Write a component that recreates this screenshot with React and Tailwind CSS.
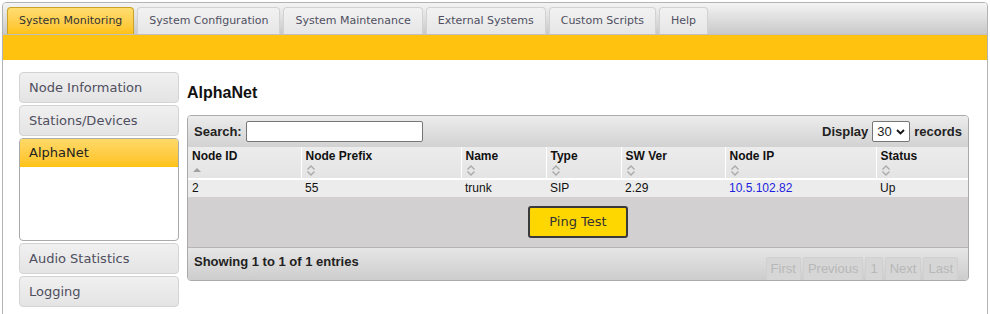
import React from 'react';

const tabs = ['System Monitoring', 'System Configuration', 'System Maintenance', 'External Systems', 'Custom Scripts', 'Help'];

const columns = [
  { label: 'Node ID', w: 'w-[113px]', sorted: true },
  { label: 'Node Prefix', w: 'w-[160px]' },
  { label: 'Name', w: 'w-[85px]' },
  { label: 'Type', w: 'w-[75px]' },
  { label: 'SW Ver', w: 'w-[104px]' },
  { label: 'Node IP', w: 'w-[151px]' },
  { label: 'Status', w: 'w-[94px]' },
];

function SortIcon({ sorted }) {
  if (sorted) {
    return (
      <svg width="10" height="10" viewBox="0 0 10 10" className="block">
        <path d="M1 7 L5 3 L9 7 Z" fill="#a0a0a0" />
      </svg>
    );
  }
  return (
    <svg width="10" height="11" viewBox="0 0 10 11" className="block">
      <path d="M1.5 4.5 L5 1 L8.5 4.5" fill="none" stroke="#aaaaaa" strokeWidth="1.4" />
      <path d="M1.5 6.5 L5 10 L8.5 6.5" fill="none" stroke="#aaaaaa" strokeWidth="1.4" />
    </svg>
  );
}

function SideItem({ label }) {
  return (
    <div className="h-[31px] flex items-center px-[9px] rounded-[4px] border border-[#d3d3d3] bg-gradient-to-b from-[#f0f0f0] to-[#e4e4e4] text-[13px] text-[#4f4f5f]">
      {label}
    </div>
  );
}

export default function App() {
  return (
    <div className="w-[990px] h-[314px] overflow-hidden bg-white pt-[2px] px-[2px] font-['DejaVu_Sans',sans-serif]">
      <div className="h-[320px] border border-[#b3b3b3] rounded-t-[4px]">
        {/* tab bar */}
        <div className="h-[32px] rounded-t-[3px] bg-gradient-to-b from-[#f4f4f4] to-[#c9c9c9] border-b border-[#c0c0c0] flex items-end gap-[3px] pl-[4px]">
          {tabs.map((t, i) => (
            <div
              key={t}
              className={
                'h-[27px] flex items-center px-[11px] rounded-t-[4px] border border-b-0 text-[11px] ' +
                (i === 0
                  ? 'bg-gradient-to-b from-[#ffdd70] to-[#ffc20e] border-[#c9a227] text-[#333]'
                  : 'bg-gradient-to-b from-[#f2f2f2] to-[#e6e6e6] border-[#d2d2d2] text-[#4f4f5f]')
              }
            >
              {t}
            </div>
          ))}
        </div>
        <div className="h-[25px] bg-[#ffc20e]" />

        {/* content */}
        <div className="flex pt-[12px] pl-[16px]">
          {/* sidebar */}
          <div className="w-[160px] flex flex-col gap-[2px]">
            <SideItem label="Node Information" />
            <SideItem label="Stations/Devices" />
            <div className="h-[103px] rounded-[4px] border border-[#aaaaaa] bg-white overflow-hidden">
              <div className="h-[28px] flex items-center px-[9px] bg-gradient-to-b from-[#ffd966] to-[#ffc20e] text-[13px] text-[#222]">
                AlphaNet
              </div>
            </div>
            <SideItem label="Audio Statistics" />
            <SideItem label="Logging" />
          </div>

          {/* main */}
          <div className="ml-[8px] w-[782px] font-['Liberation_Sans',Arial,sans-serif] text-[#111]">
            <div className="h-[43px] flex items-center pb-[2px] text-[16px] font-bold">AlphaNet</div>

            <div className="border border-[#aaaaaa] rounded-[4px] overflow-hidden">
              {/* toolbar */}
              <div className="h-[31px] flex items-center justify-between px-[6px] bg-gradient-to-b from-[#ececec] to-[#d2d2d2] text-[13px] font-bold text-[#222]">
                <div className="flex items-center gap-[4px]">
                  <span>Search:</span>
                  <div className="w-[177px] h-[21px] bg-white border border-[#767676] rounded-[2px]" />
                </div>
                <div className="flex items-center gap-[4px]">
                  <span>Display</span>
                  <div className="w-[38px] h-[21px] bg-white border border-[#767676] rounded-[2px] flex items-center justify-between px-[4px] font-normal text-[13px]">
                    <span>30</span>
                    <svg width="9" height="6" viewBox="0 0 9 6">
                      <path d="M1 1 L4.5 4.5 L8 1" fill="none" stroke="#111" strokeWidth="1.8" />
                    </svg>
                  </div>
                  <span>records</span>
                </div>
              </div>

              {/* table */}
              <table className="w-full border-collapse table-fixed text-[12px]">
                <thead>
                  <tr className="bg-gradient-to-b from-[#ececec] to-[#e4e4e4]">
                    {columns.map((c, i) => (
                      <th
                        key={c.label}
                        className={
                          c.w +
                          ' h-[32px] align-top text-left font-bold px-[4px] pt-[2px] border-b-2 border-white ' +
                          (i < columns.length - 1 ? 'border-r border-r-white' : '')
                        }
                      >
                        <div className="leading-[15px]">{c.label}</div>
                        <div className="mt-[1px]">
                          <SortIcon sorted={c.sorted} />
                        </div>
                      </th>
                    ))}
                  </tr>
                </thead>
                <tbody>
                  <tr className="bg-[#ececec]">
                    <td className="px-[4px] leading-[17px]">2</td>
                    <td className="px-[4px] leading-[17px]">55</td>
                    <td className="px-[4px] leading-[17px]">trunk</td>
                    <td className="px-[4px] leading-[17px]">SIP</td>
                    <td className="px-[4px] leading-[17px]">2.29</td>
                    <td className="px-[4px] leading-[17px] text-[#2222dd]">10.5.102.82</td>
                    <td className="px-[4px] leading-[17px]">Up</td>
                  </tr>
                </tbody>
              </table>

              {/* ping */}
              <div className="h-[50px] bg-[#d2d0d0] flex items-center justify-center">
                <button className="w-[100px] h-[32px] bg-[#ffd700] border-2 border-[#3a3a3a] rounded-[3px] text-[13px] text-[#333] font-['DejaVu_Sans',sans-serif]">
                  Ping Test
                </button>
              </div>

              {/* footer */}
              <div className="h-[33px] border-t border-[#b5b5b5] bg-gradient-to-b from-[#e6e6e6] to-[#cdcdcd] flex items-center justify-between pl-[6px] pr-[10px]">
                <span className="text-[13px] font-bold text-[#222] -mt-[5px]">Showing 1 to 1 of 1 entries</span>
                <div className="flex self-end gap-[2px] text-[13px] text-[#b8b8b8]">
                  {['First', 'Previous', '1', 'Next', 'Last'].map((p) => (
                    <span key={p} className="h-[23px] px-[4px] flex items-center bg-[#d6d6d6] border border-[#d0d0d0] border-b-0 rounded-t-[2px]">
                      {p}
                    </span>
                  ))}
                </div>
              </div>
            </div>
          </div>
        </div>
      </div>
    </div>
  );
}
